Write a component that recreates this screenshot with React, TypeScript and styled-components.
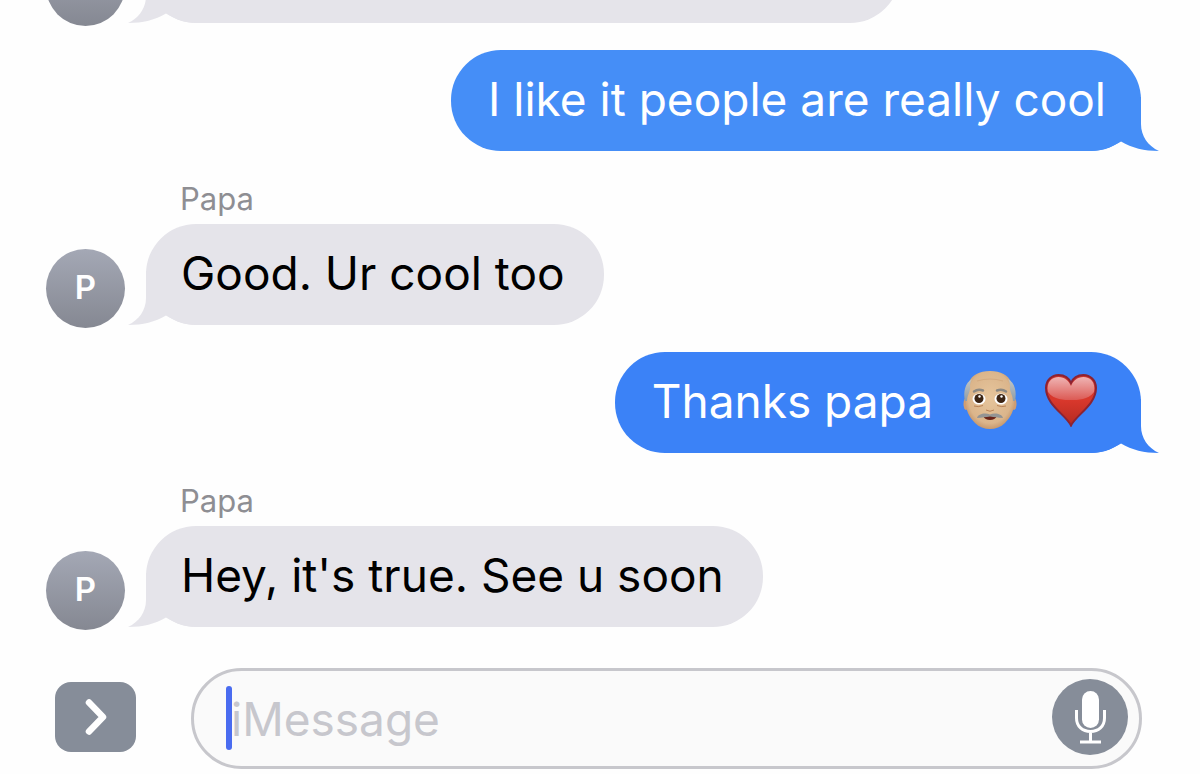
import React from 'react';
import styled, { createGlobalStyle } from 'styled-components';

const GlobalStyle = createGlobalStyle`
  * { box-sizing: border-box; }
  body {
    margin: 0;
    background: #fefefe;
    font-family: Inter, "Liberation Sans", sans-serif;
  }
`;

const Screen = styled.main`
  display: flex;
  flex-direction: column;
  height: 100vh;
  overflow: hidden;
`;

const Thread = styled.section`
  flex: 1;
  min-height: 0;
  display: flex;
  flex-direction: column;
  justify-content: flex-end;
  gap: 27px;
  padding: 0 59px 3px 46px;
  overflow: hidden;
`;

const OutgoingRow = styled.div`
  display: flex;
  justify-content: flex-end;
`;

const IncomingRow = styled.div`
  display: flex;
  align-items: flex-end;
  gap: 21px;
`;

const IncomingBody = styled.div`
  display: flex;
  flex-direction: column;
  align-items: flex-start;
`;

const Sender = styled.span`
  padding-left: 34px;
  margin-bottom: 5px;
  font-size: 31px;
  line-height: 41px;
  color: #8e8e93;
`;

const Avatar = styled.div`
  display: flex;
  align-items: center;
  justify-content: center;
  width: 79px;
  height: 79px;
  margin-bottom: -3px;
  padding-bottom: 4px;
  border-radius: 50%;
  background: linear-gradient(#a4a8b5, #858892);
  color: #fff;
  font-size: 33px;
  font-weight: 600;
  line-height: 40px;
`;

const Bubble = styled.div<{ $fill: string; $ink: string; $minWidth?: number }>`
  position: relative;
  isolation: isolate;
  display: flex;
  align-items: center;
  height: 101px;
  min-width: ${(p) => p.$minWidth ?? 0}px;
  padding: 0 39px 4px 35px;
  border-radius: 50px;
  background: ${(p) => p.$fill};
  color: ${(p) => p.$ink};
  font-size: 46px;
  line-height: 60px;
  white-space: nowrap;
`;

const OutgoingBubble = styled(Bubble)`
  padding: 0 35px 4px 37px;
`;

const EmojiGroup = styled.span`
  display: flex;
  align-items: center;
  gap: 27px;
  padding: 0 8px 2px 30px;
`;

const TailShape = styled.svg<{ $side: 'left' | 'right' }>`
  position: absolute;
  z-index: -1;
  bottom: 0;
  ${(p) => (p.$side === 'right' ? 'right: -18px;' : 'left: -18px; transform: scaleX(-1);')}
`;

const Composer = styled.form`
  display: flex;
  align-items: center;
  gap: 55px;
  padding: 38px 58px 5px 55px;
`;

const AppsButton = styled.button`
  flex: none;
  display: flex;
  align-items: center;
  justify-content: center;
  width: 81px;
  height: 70px;
  margin-top: -3px;
  padding: 0;
  border: 0;
  border-radius: 16px;
  background: #868d99;
`;

const Field = styled.div`
  position: relative;
  flex: 1;
  display: flex;
  align-items: center;
  height: 101px;
  padding: 0 11px 0 37px;
  border: 3px solid #c7c7cc;
  border-radius: 51px;
  background: #fafafa;
`;

const Caret = styled.span`
  position: absolute;
  left: 32px;
  top: 15px;
  width: 6px;
  height: 64px;
  border-radius: 3px;
  background: #4a6cf0;
`;

const MessageInput = styled.input`
  flex: 1;
  min-width: 0;
  padding: 0;
  border: 0;
  outline: 0;
  background: transparent;
  color: #000;
  font-family: inherit;
  font-size: 46px;
  line-height: 60px;
  height: 64px;
  &::placeholder { color: #c7c7cd; opacity: 1; }
`;

const MicButton = styled.button`
  flex: none;
  width: 76px;
  height: 76px;
  margin-top: -4px;
  padding: 0;
  border: 0;
  border-radius: 50%;
  background: #868d99;
`;

const GREY = '#e5e4ea';

function Tail({ side, fill }: { side: 'left' | 'right'; fill: string }) {
  return (
    <TailShape $side={side} width="69" height="54" viewBox="0 0 69 54" aria-hidden="true">
      <path d="M0 0H51V27C51 39 58 49 69 54C54 54 42 51 31 44.500C22 50 12 54 0 54Z" fill={fill} />
    </TailShape>
  );
}

function Outgoing({ fill, children }: { fill: string; children: React.ReactNode }) {
  return (
    <OutgoingRow>
      <OutgoingBubble $fill={fill} $ink="#fff">
        {children}
        <Tail side="right" fill={fill} />
      </OutgoingBubble>
    </OutgoingRow>
  );
}

type IncomingProps = { initial?: string; sender?: string; text?: string; minWidth?: number };

function Incoming({ initial, sender, text, minWidth }: IncomingProps) {
  return (
    <IncomingRow>
      <Avatar>{initial}</Avatar>
      <IncomingBody>
        {sender && <Sender>{sender}</Sender>}
        <Bubble $fill={GREY} $ink="#000" $minWidth={minWidth}>
          {text}
          <Tail side="left" fill={GREY} />
        </Bubble>
      </IncomingBody>
    </IncomingRow>
  );
}

function OldMan() {
  return (
    <svg width="54" height="60" viewBox="0 0 54 60" role="img" aria-label="Old man">
      <defs>
        <radialGradient id="skin" cx="50%" cy="45%" r="60%">
          <stop offset="0" stopColor="#e6c59c" />
          <stop offset="0.75" stopColor="#dbb58b" />
          <stop offset="1" stopColor="#bd8b60" />
        </radialGradient>
        <linearGradient id="hair" x1="0" y1="0" x2="0" y2="1">
          <stop offset="0" stopColor="#c3c6c4" />
          <stop offset="1" stopColor="#8e9ca8" />
        </linearGradient>
      </defs>
      <ellipse cx="3" cy="34" rx="2.500" ry="6" fill="#cf9d72" />
      <ellipse cx="51" cy="34" rx="2.500" ry="6" fill="#cf9d72" />
      <path d="M27 1C16 1 9 5 6 12C4 18 4 24 3 29C2 38 5 46 12 53C20 61 34 61 42 53C49 46 52 38 51 29C50 24 50 18 48 12C45 5 38 1 27 1Z" fill="url(#skin)" />
      <path d="M9 9C2 13 0 22 2 31L4 31C4 25 8 21 7 16C7 13 8 11 9 9ZM45 9C52 13 54 22 52 31L50 31C50 25 46 21 47 16C47 13 46 11 45 9Z" fill="url(#hair)" />
      <path d="M14 11Q27 7 40 11" fill="none" stroke="#c99c70" strokeWidth="1" opacity="0.5" />
      <path d="M11 21.500Q15 18.500 20 20.500M34 20.500Q39 18.500 43 21.500" fill="none" stroke="#8c8882" strokeWidth="2.500" strokeLinecap="round" />
      <ellipse cx="16" cy="29" rx="6.500" ry="5.500" fill="#fff" />
      <ellipse cx="38" cy="29" rx="6.500" ry="5.500" fill="#fff" />
      <circle cx="16" cy="28.500" r="4.500" fill="#3b2414" />
      <circle cx="38" cy="28.500" r="4.500" fill="#3b2414" />
      <circle cx="16.500" cy="26.500" r="1.200" fill="#fff" />
      <circle cx="38.500" cy="26.500" r="1.200" fill="#fff" />
      <path d="M11 36Q15 37.500 20 35.500M34 35.500Q39 37.500 43 36M23 40Q27 42.500 31 40" fill="none" stroke="#b98256" strokeWidth="1" />
      <path d="M20 46Q27 45 34 46Q32 50 27 50Q22 50 20 46Z" fill="#6b2419" />
      <path d="M14 48C15 44 22 42.500 27 44.500C32 42.500 39 44 40 48C35 47.500 31 47 27 46.500C23 47 19 47.500 14 48Z" fill="#939494" />
    </svg>
  );
}

function Heart() {
  return (
    <svg width="54" height="54" viewBox="0 0 54 54" role="img" aria-label="Heart">
      <defs>
        <linearGradient id="heart" x1="0" y1="0" x2="0" y2="1">
          <stop offset="0" stopColor="#c8322c" />
          <stop offset="0.5" stopColor="#d9382c" />
          <stop offset="1" stopColor="#b52a20" />
        </linearGradient>
        <linearGradient id="gloss" x1="0" y1="0" x2="0" y2="1">
          <stop offset="0" stopColor="#efb4b4" />
          <stop offset="1" stopColor="#dc5a54" />
        </linearGradient>
      </defs>
      <path d="M27 52.500C22 42 2 32 2 15C2 7 8 2 14.500 2C20.500 2 25 5 27 10C29 5 33.500 2 39.500 2C46 2 52 7 52 15C52 32 32 42 27 52.500Z" fill="url(#heart)" stroke="#8c2332" strokeWidth="2" />
      <path d="M4 19C2 9 8 4 14.500 4C21 4 25 8 27 13C29 8 33 4 39.500 4C46 4 52 9 50 19C44 27 34 27 27 27C20 27 10 27 4 19Z" fill="url(#gloss)" />
    </svg>
  );
}

export default function App() {
  return (
    <Screen>
      <GlobalStyle />
      <Thread>
        <Incoming minWidth={754} />
        <Outgoing fill="#458ef7">I like it people are really cool</Outgoing>
        <Incoming initial="P" sender="Papa" text="Good. Ur cool too" />
        <Outgoing fill="#3b82f7">
          <span>Thanks papa</span>
          <EmojiGroup>
            <OldMan />
            <Heart />
          </EmojiGroup>
        </Outgoing>
        <Incoming initial="P" sender="Papa" text="Hey, it's true. See u soon" />
      </Thread>
      <Composer onSubmit={(e) => e.preventDefault()}>
        <AppsButton type="button" aria-label="Show apps">
          <svg width="24" height="38" viewBox="0 0 24 38" aria-hidden="true">
            <path d="M5 4.500L19 19L5 33.500" fill="none" stroke="#fff" strokeWidth="6.500" strokeLinecap="round" strokeLinejoin="round" />
          </svg>
        </AppsButton>
        <Field>
          <MessageInput type="text" aria-label="Message" placeholder="iMessage" />
          <Caret />
          <MicButton type="button" aria-label="Dictate">
            <svg width="76" height="76" viewBox="0 0 76 76" aria-hidden="true">
              <rect x="30" y="12" width="17" height="37" rx="8.500" fill="#fff" />
              <path d="M24.500 31V39C24.500 47.500 30.500 52.500 38.500 52.500S52.500 47.500 52.500 39V31M38.500 53V63M28 63H49" fill="none" stroke="#fff" strokeWidth="3" />
            </svg>
          </MicButton>
        </Field>
      </Composer>
    </Screen>
  );
}
